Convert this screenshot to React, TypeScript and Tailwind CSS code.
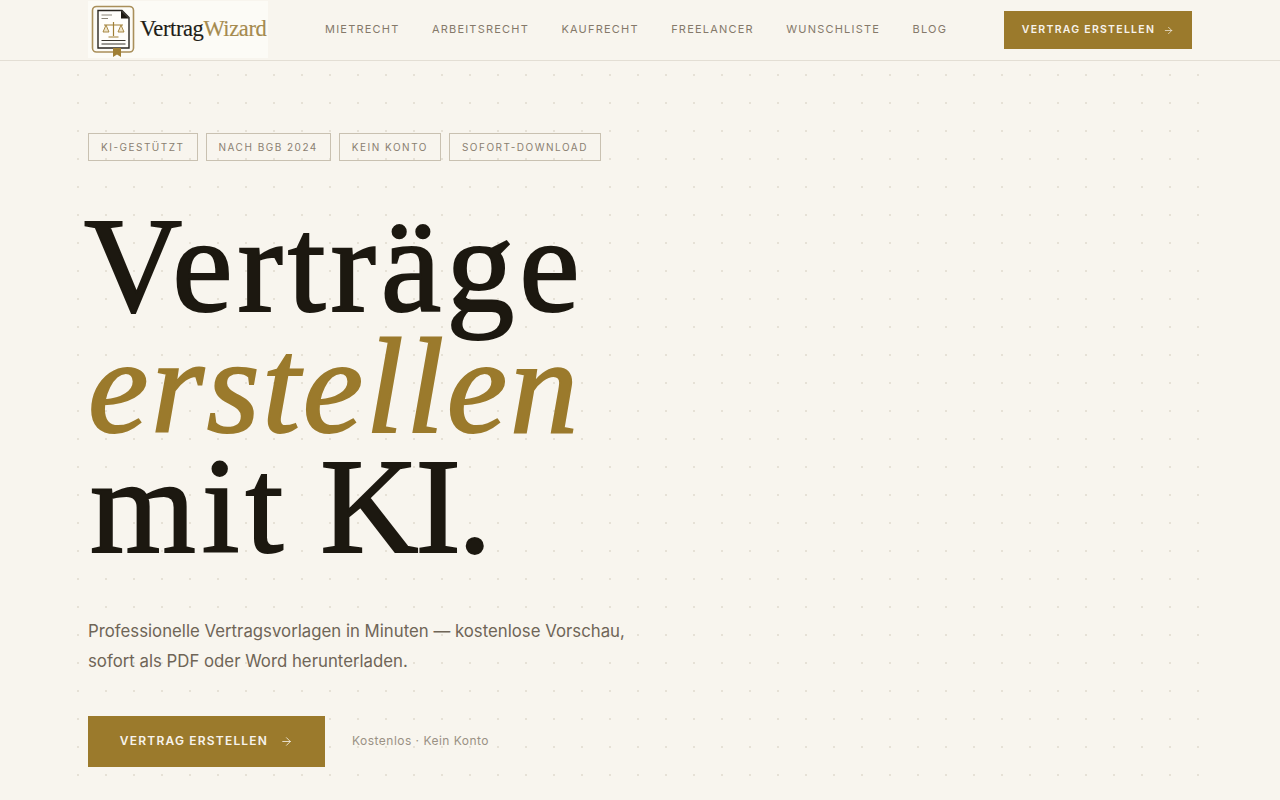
import { ArrowRight } from "lucide-react";

const links = ["MIETRECHT", "ARBEITSRECHT", "KAUFRECHT", "FREELANCER", "WUNSCHLISTE", "BLOG"];
const tags = ["KI-GESTÜTZT", "NACH BGB 2024", "KEIN KONTO", "SOFORT-DOWNLOAD"];

function LogoMark() {
  return (
    <svg width="48" height="54" viewBox="0 0 48 54" fill="none" className="shrink-0">
      <rect x="3.5" y="3.5" width="41" height="45.5" rx="4" stroke="#a98f5a" strokeWidth="1.6" />
      <path d="M9 7.5H33L40 14.5V45H9Z" fill="#fffefb" stroke="#2a2620" strokeWidth="1.4" />
      <path d="M32 7.5L40 15.5H32Z" fill="#1c1810" />
      <path d="M12.5 12H23M12.5 15.5H19" stroke="#8b8578" strokeWidth="1" />
      <path d="M24.5 19V33M15 22H34M19.5 34H29.5" stroke="#a07f35" strokeWidth="1.2" />
      <path d="M17 22L14 29H20ZM32 22L29 29H35Z" stroke="#a07f35" strokeWidth="0.9" fill="#efe4c8" />
      <path d="M12.5 37.5H36.5M12.5 41H36.5" stroke="#3a362e" strokeWidth="1" />
      <path d="M24 45H32V54L28 51.5L24 54Z" fill="#a07f35" />
    </svg>
  );
}

export default function App() {
  return (
    <div className="h-[800px] overflow-hidden bg-[#f8f5ee] font-['Inter',sans-serif] antialiased">
      <header className="h-[61px] border-b border-[#e3ded4] px-[88px] flex items-center">
        <div className="w-[180px] h-[57px] -mt-[1px] bg-[#fcfbf6] flex items-center pl-[1px] gap-[3px]">
          <LogoMark />
          <span className="font-['Liberation_Serif',serif] text-[22.5px] tracking-[-0.4px] text-[#211d17] leading-none [-webkit-text-stroke:0.15px_#211d17]">
            Vertrag<span className="text-[#a58a4e] [-webkit-text-stroke:0.15px_#a58a4e]">Wizard</span>
          </span>
        </div>
        <nav className="flex items-center gap-[32.4px] ml-[57px] -mt-[2px]">
          {links.map((l) => (
            <span key={l} className="text-[11px] tracking-[0.11em] text-[#85796a]">{l}</span>
          ))}
        </nav>
        <div className="ml-auto w-[188px] h-[38px] bg-[#9b7a2c] flex items-center justify-center gap-[8px] text-[10.5px] font-semibold tracking-[0.12em] text-[#f7f3ec]">
          VERTRAG ERSTELLEN
          <ArrowRight size={11} strokeWidth={1.5} />
        </div>
      </header>
      <main className="relative h-[739px] pl-[88px] pt-[72px]">
        <div className="absolute left-[64px] top-0 bottom-0 w-[1148px] bg-[radial-gradient(circle,#e6e1d6_1px,transparent_1px)] bg-[size:28px_28px]" />
        <div className="relative">
          <div className="flex gap-[8px]">
            {tags.map((t) => (
              <span key={t} className="h-[28px] px-[12px] flex items-center border border-[#c9c1b1] text-[10px] tracking-[0.15em] text-[#8a8071]">{t}</span>
            ))}
          </div>
          <h1 className="mt-[44px] font-['Liberation_Serif',serif] font-normal text-[136px] leading-[120.5px] text-[#1c1810] [-webkit-text-stroke:2px_#1c1810] -ml-[4px]">
            <span className="tracking-[5px]">Verträge</span>
            <br />
            <em className="ml-[4px] tracking-[2.7px] text-[#9b7a2c] [-webkit-text-stroke:2px_#9b7a2c]">erstellen</em>
            <br />
            <span className="ml-[6px] tracking-[6px] [word-spacing:-9px]">mit </span>
            <span className="tracking-[-3px]">KI.</span>
          </h1>
          <p className="mt-[49px] text-[16.8px] leading-[30px] text-[#6f6557]">
            Professionelle Vertragsvorlagen in Minuten — kostenlose Vorschau,
            <br />
            sofort als PDF oder Word herunterladen.
          </p>
          <div className="mt-[40px] flex items-center gap-[27px]">
            <div className="w-[237px] h-[51px] bg-[#9b7a2c] flex items-center justify-center gap-[12px] text-[12px] font-semibold tracking-[0.1em] text-[#f7f3ec]">
              VERTRAG ERSTELLEN
              <ArrowRight size={13} strokeWidth={1.5} />
            </div>
            <span className="text-[12px] tracking-[0.04em] text-[#9a9184]">Kostenlos · Kein Konto</span>
          </div>
        </div>
      </main>
    </div>
  );
}
